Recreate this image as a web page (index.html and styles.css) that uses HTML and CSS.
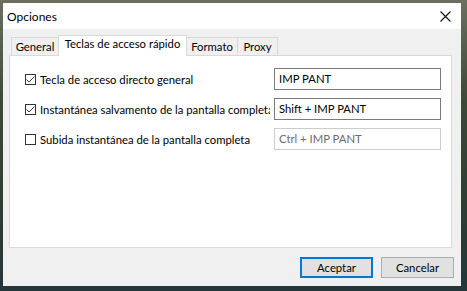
FILE: index.html
```html
<!DOCTYPE html>
<html lang="es">
<head>
<meta charset="utf-8">
<title>Opciones</title>
<link rel="stylesheet" href="styles.css">
</head>
<body>
<div class="window">
  <div class="titlebar">
    <span class="title">Opciones</span>
    <svg class="close" width="11" height="11" viewBox="0 0 11 11"><path d="M0.5 0.5 L10.5 10.5 M10.5 0.5 L0.5 10.5" stroke="#111" stroke-width="1.1" fill="none"/></svg>
  </div>
  <div class="content">
    <div class="tabs">
      <div class="tab">General</div>
      <div class="tab active">Teclas de acceso rápido</div>
      <div class="tab">Formato</div>
      <div class="tab">Proxy</div>
    </div>
    <div class="panel">
      <div class="row">
        <div class="check">
          <span class="box"><svg width="11" height="11" viewBox="0 0 11 11"><path d="M1.5 5.5 L4 8 L9.5 2.5" stroke="#333" stroke-width="1" fill="none"/></svg></span>
          <span class="label">Tecla de acceso directo general</span>
        </div>
        <div class="input">IMP PANT</div>
      </div>
      <div class="row">
        <div class="check">
          <span class="box"><svg width="11" height="11" viewBox="0 0 11 11"><path d="M1.5 5.5 L4 8 L9.5 2.5" stroke="#333" stroke-width="1" fill="none"/></svg></span>
          <span class="label">Instantánea salvamento de la pantalla completa</span>
        </div>
        <div class="input">Shift + IMP PANT</div>
      </div>
      <div class="row">
        <div class="check">
          <span class="box"></span>
          <span class="label">Subida instantánea de la pantalla completa</span>
        </div>
        <div class="input disabled">Ctrl + IMP PANT</div>
      </div>
    </div>
    <div class="buttons">
      <div class="btn default">Aceptar</div>
      <div class="btn">Cancelar</div>
    </div>
  </div>
</div>
</body>
</html>
```
FILE: styles.css
```css
html, body {
  margin: 0;
  height: 291px;
  overflow: hidden;
}
body {
  box-sizing: border-box;
  padding: 3px 6px 5px 3px;
  background: linear-gradient(180deg, #6b705e 0%, #3e4838 35%, #2f3d33 70%, #24363a 100%);
  font-family: "Segoe UI", Lato, "Liberation Sans", sans-serif;
  font-size: 11.3px;
  color: #000;
}
.window {
  width: 458px;
  height: 283px;
  background: #f0f0f0;
  display: flex;
  flex-direction: column;
}
.titlebar {
  height: 26px;
  background: #fff;
  display: flex;
  align-items: center;
  justify-content: space-between;
  padding: 0 10px 0 4px;
  flex: none;
}
.title {
  font-size: 12px;
}
.close {
  display: block;
}
.content {
  flex: 1;
  display: flex;
  flex-direction: column;
  padding: 6px 9px 8px 6px;
}
.tabs {
  display: flex;
  align-items: flex-end;
  height: 20px;
  padding-left: 2px;
  flex: none;
}
.tab {
  box-sizing: border-box;
  height: 18px;
  line-height: 17px;
  text-align: center;
  border: 1px solid #d9d9d9;
  border-bottom: none;
  border-right: none;
  background: #f0f0f0;
}
.tab:nth-child(1) { width: 47px; }
.tab:nth-child(2) { width: 129px; }
.tab:nth-child(3) { width: 50px; }
.tab:nth-child(4) { width: 41px; border-right: 1px solid #d9d9d9; }
.tab.active {
  height: 21px;
  margin-bottom: -1px;
  line-height: 16px;
  background: #fff;
  border-right: 1px solid #d9d9d9;
  position: relative;
  z-index: 1;
}
.tab.active + .tab {
  border-left: none;
}
.panel {
  flex: 1;
  background: #fff;
  border: 1px solid #d9d9d9;
  padding: 12px 10px 0 15px;
  display: flex;
  flex-direction: column;
  gap: 8px;
}
.row {
  display: flex;
  align-items: center;
  height: 22px;
}
.check {
  width: 249px;
  display: flex;
  align-items: center;
  gap: 4px;
}
.box {
  box-sizing: border-box;
  width: 11px;
  height: 11px;
  border: 1px solid #333;
  background: #fff;
  flex: none;
  position: relative;
}
.box svg {
  position: absolute;
  left: -1px;
  top: -1px;
}
.label {
  width: 230px;
  overflow: hidden;
  white-space: nowrap;
}
.input {
  box-sizing: border-box;
  width: 167px;
  height: 22px;
  border: 1px solid #7a7a7a;
  padding: 0 4px;
  line-height: 20px;
  background: #fff;
}
.input.disabled {
  border-color: #cccccc;
  color: #6d6d6d;
}
.buttons {
  display: flex;
  justify-content: flex-end;
  gap: 8px;
  margin-top: 9px;
  margin-right: -2px;
  flex: none;
}
.btn {
  box-sizing: border-box;
  width: 73px;
  height: 21px;
  background: #e1e1e1;
  border: 1px solid #adadad;
  text-align: center;
  line-height: 19px;
}
.btn.default {
  border: 2px solid #0078d7;
  line-height: 17px;
}
```
